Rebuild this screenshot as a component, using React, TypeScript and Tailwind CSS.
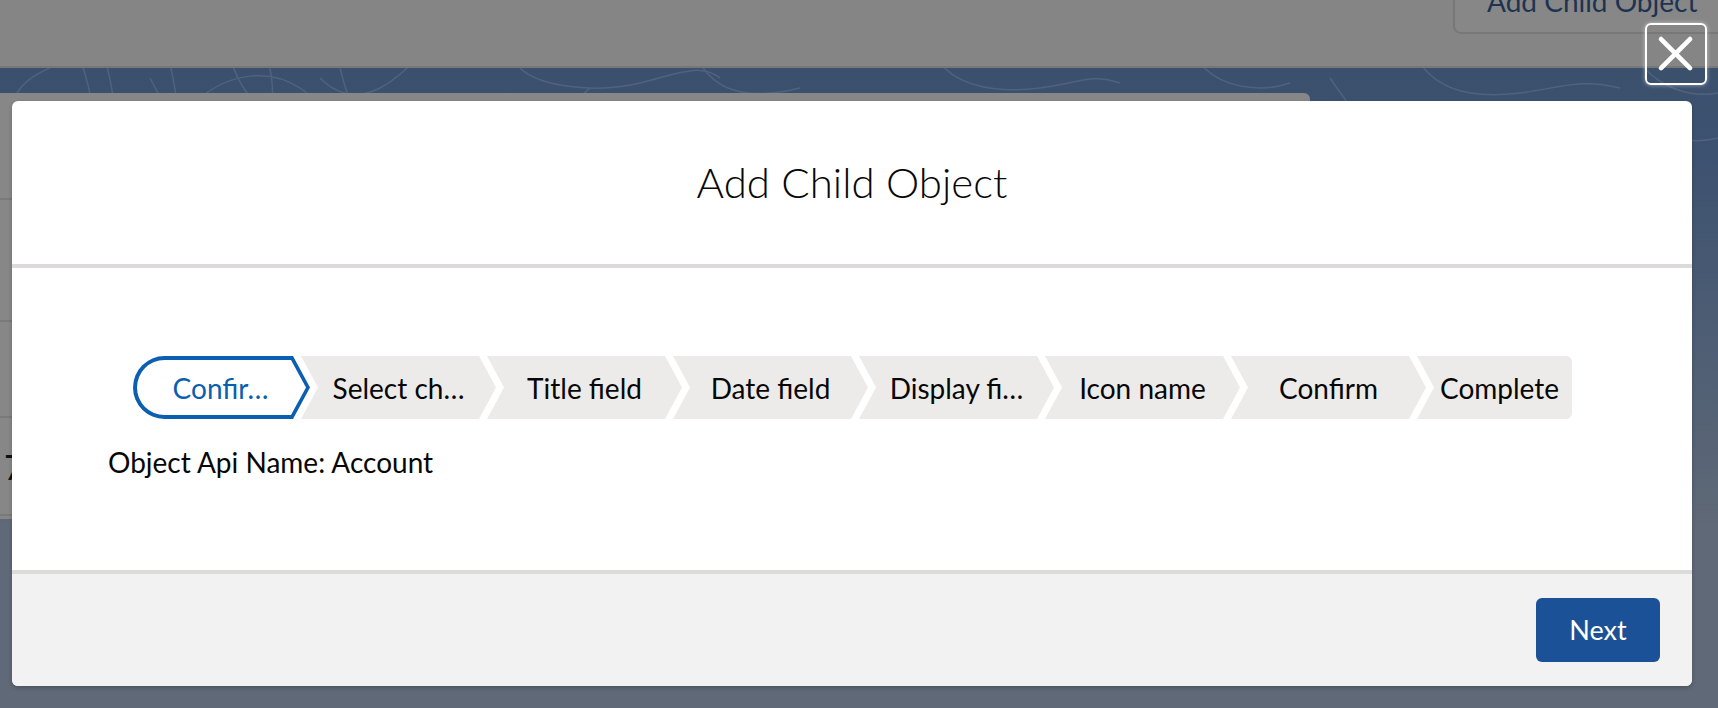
import React from "react";

const middleSteps = ["Select ch…", "Title field", "Date field", "Display fi…", "Icon name", "Confirm"];

const chevron =
  "[clip-path:polygon(0_0,calc(100%_-_17px)_0,100%_50%,calc(100%_-_17px)_100%,0_100%,17px_50%)]";

function Contours() {
  // faint topographic lines of the org banner
  return (
    <svg className="absolute inset-x-0 top-0 h-[200px] w-full" viewBox="0 0 1718 200" fill="none">
      <g stroke="#4f6380" strokeWidth="1.5">
        <path d="M10 40 C 20 10, 40 5, 60 -5" />
        <path d="M30 60 C 50 20, 90 20, 120 40 S 170 80, 200 60" />
        <path d="M80 -10 C 90 20, 95 40, 90 70" />
        <path d="M105 -10 C 115 30, 118 50, 112 90" />
        <path d="M150 10 C 160 30, 170 40, 160 60 C 150 80, 130 70, 140 50" />
        <path d="M170 -5 C 175 20, 180 40, 175 70" />
        <path d="M200 30 C 230 5, 270 0, 300 20 S 320 60, 300 80" />
        <path d="M230 -10 C 240 20, 250 30, 262 40" />
        <path d="M270 0 C 275 25, 272 50, 268 80" />
        <path d="M320 10 C 340 30, 360 30, 380 20 C 400 10, 410 -5, 420 -10" />
        <path d="M380 90 C 360 60, 350 40, 340 0" />
        <path d="M400 60 C 420 40, 460 30, 500 35 S 560 50, 590 20" />
        <path d="M520 0 C 540 20, 600 25, 640 15 S 700 -5, 720 10" />
        <path d="M650 80 C 680 50, 720 40, 760 50 S 820 70, 840 40" />
        <path d="M700 -5 C 720 30, 760 30, 800 20" />
        <path d="M860 60 C 900 40, 960 40, 1000 55 S 1060 70, 1100 50" />
        <path d="M940 -5 C 960 20, 1000 25, 1040 20 S 1090 5, 1120 15" />
        <path d="M1130 70 C 1160 40, 1200 30, 1240 40 S 1300 70, 1340 45" />
        <path d="M1200 -5 C 1220 20, 1260 25, 1290 15" />
        <path d="M1330 10 C 1350 40, 1370 60, 1380 90" />
        <path d="M1350 80 C 1390 50, 1440 40, 1490 50 S 1560 70, 1600 50" />
        <path d="M1420 -5 C 1440 25, 1480 30, 1520 25 S 1580 10, 1620 20" />
        <path d="M1540 90 C 1560 70, 1580 60, 1620 60 S 1680 80, 1718 70" />
        <path d="M1640 -5 C 1660 20, 1690 30, 1718 25" />
      </g>
    </svg>
  );
}

export default function App() {
  return (
    <div className="relative h-[708px] w-[1718px] overflow-hidden bg-[#5f6977] [font-family:Lato,sans-serif]">
      {/* page behind the overlay */}
      <div className="flex h-[68px] justify-end overflow-hidden border-b-2 border-[#777777] bg-[#858585]">
        <div className="-mr-[20px] -mt-[26px] flex h-[60px] w-[285px] shrink-0 items-center rounded-bl-[8px] border-2 border-[#787878] bg-[#878787] pb-[6px] pl-[32px] text-[28px] text-[#1d3352]">
          Add Child Object
        </div>
      </div>
      <div className="relative h-[640px] bg-[#3c516e] pt-[25px] [background-image:linear-gradient(180deg,#3b506d_0px,#3d5270_90px,#5f6977_460px)]">
        <Contours />
        <div className="relative flex h-[426px] w-[1310px] flex-col rounded-tr-[6px] bg-[#878787]">
          <div className="h-[107px] border-b-2 border-[#7a7a7a]" />
          <div className="h-[122px] border-b-2 border-[#7a7a7a]" />
          <div className="h-[96px] border-b-2 border-[#7a7a7a]" />
          <div className="flex h-[98px] items-center border-b-2 border-[#7a7a7a] pl-[4px] text-[34px] text-[#111]">7</div>
        </div>
      </div>

      {/* close button */}
      <button className="absolute left-[1645px] top-[23px] flex size-[62px] items-center justify-center rounded-[6px] border-2 border-white shadow-[0_0_4px_rgba(255,255,255,0.5)]">
        <svg width="62" height="62" viewBox="0 0 62 62" fill="none">
          <path d="M15 15 L46 46 M46 15 L15 46" stroke="white" strokeWidth="5" strokeLinecap="round" />
        </svg>
      </button>

      {/* modal */}
      <div className="absolute left-[12px] top-[101px] flex h-[585px] w-[1680px] flex-col overflow-hidden rounded-[6px] bg-white shadow-[0_2px_4px_rgba(0,0,0,0.2)]">
        <div className="flex h-[167px] items-center justify-center border-b-4 border-[#dddbda] pb-[2px] text-[42px] font-light leading-[50px] text-[#080707]">
          Add Child Object
        </div>
        <div className="h-[306px] border-b-4 border-[#dddbda] pt-[88px] text-[28px] text-[#080707]">
          <div className="ml-[121px] flex h-[63px]">
            <div className="h-[63px] w-[177px] rounded-l-full bg-[#0b5fb0] p-[4px] [clip-path:polygon(0_0,calc(100%_-_17px)_0,100%_50%,calc(100%_-_17px)_100%,0_100%)]">
              <div className="flex h-full items-center justify-center rounded-l-full bg-white pr-[2px] text-[#0b5fb0] [clip-path:polygon(0_0,calc(100%_-_15px)_0,100%_50%,calc(100%_-_15px)_100%,0_100%)]">
                Confir…
              </div>
            </div>
            {middleSteps.map((label) => (
              <div key={label} className={`-ml-[9px] flex h-[63px] w-[195px] items-center justify-center bg-[#ecebea] ${chevron}`}>
                {label}
              </div>
            ))}
            <div className="-ml-[9px] flex h-[63px] w-[155px] items-center justify-center rounded-r-[6px] bg-[#ecebea] pl-[10px] [clip-path:polygon(0_0,100%_0,100%_100%,0_100%,17px_50%)]">
              Complete
            </div>
          </div>
          <p className="ml-[96px] mt-[26px] leading-[34px]">Object Api Name: Account</p>
        </div>
        <div className="flex flex-1 items-center justify-end bg-[#f3f2f2] pr-[32px]">
          <button className="flex h-[64px] w-[124px] items-center justify-center rounded-[6px] bg-[#1b5297] text-[27px] text-white">
            Next
          </button>
        </div>
      </div>
    </div>
  );
}
